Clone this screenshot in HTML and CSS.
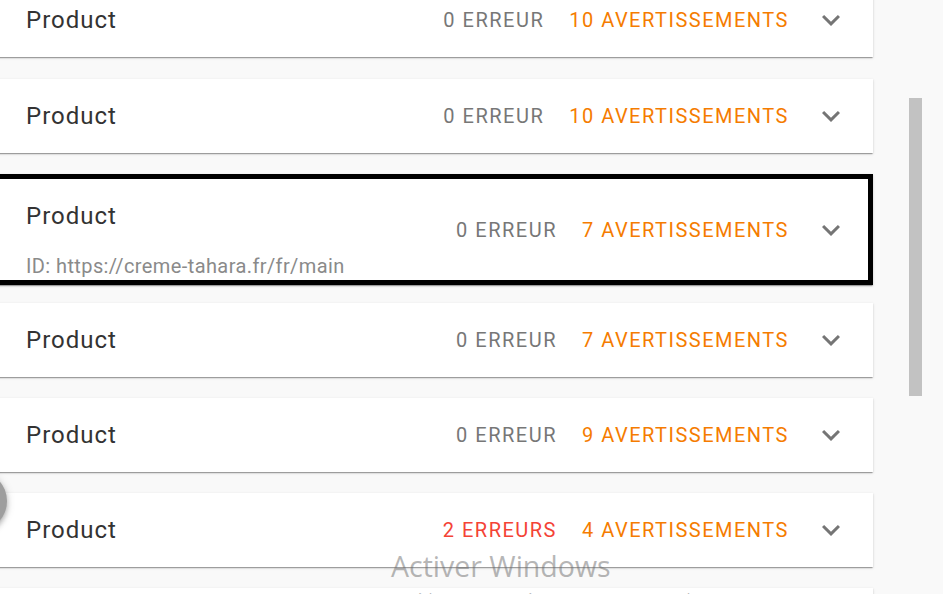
FILE: index.html
```html
<!DOCTYPE html>
<html lang="fr">
<head>
<meta charset="utf-8">
<title>Produits</title>
<link rel="stylesheet" href="styles.css">
</head>
<body>
<div class="page">
  <main class="list">
    <div class="card">
      <div class="info"><div class="title">Product</div></div>
      <div class="counts"><span class="err">0 ERREUR</span><span class="warn">10 AVERTISSEMENTS</span></div>
      <svg class="chev" viewBox="0 0 24 24"><path d="M16.59 8.59L12 13.17 7.41 8.59 6 10l6 6 6-6z"/></svg>
    </div>
    <div class="card">
      <div class="info"><div class="title">Product</div></div>
      <div class="counts"><span class="err">0 ERREUR</span><span class="warn">10 AVERTISSEMENTS</span></div>
      <svg class="chev" viewBox="0 0 24 24"><path d="M16.59 8.59L12 13.17 7.41 8.59 6 10l6 6 6-6z"/></svg>
    </div>
    <div class="card selected">
      <div class="info"><div class="title">Product</div><div class="id">ID: https://creme-tahara.fr/fr/main</div></div>
      <div class="counts"><span class="err">0 ERREUR</span><span class="warn">7 AVERTISSEMENTS</span></div>
      <svg class="chev" viewBox="0 0 24 24"><path d="M16.59 8.59L12 13.17 7.41 8.59 6 10l6 6 6-6z"/></svg>
    </div>
    <div class="card">
      <div class="info"><div class="title">Product</div></div>
      <div class="counts"><span class="err">0 ERREUR</span><span class="warn">7 AVERTISSEMENTS</span></div>
      <svg class="chev" viewBox="0 0 24 24"><path d="M16.59 8.59L12 13.17 7.41 8.59 6 10l6 6 6-6z"/></svg>
    </div>
    <div class="card">
      <div class="info"><div class="title">Product</div></div>
      <div class="counts"><span class="err">0 ERREUR</span><span class="warn">9 AVERTISSEMENTS</span></div>
      <svg class="chev" viewBox="0 0 24 24"><path d="M16.59 8.59L12 13.17 7.41 8.59 6 10l6 6 6-6z"/></svg>
    </div>
    <div class="card">
      <div class="info"><div class="title">Product</div></div>
      <div class="counts"><span class="err red">2 ERREURS</span><span class="warn">4 AVERTISSEMENTS</span></div>
      <svg class="chev" viewBox="0 0 24 24"><path d="M16.59 8.59L12 13.17 7.41 8.59 6 10l6 6 6-6z"/></svg>
    </div>
    <div class="card">
      <div class="info"><div class="title">Product</div></div>
      <div class="counts"><span class="err">0 ERREUR</span><span class="warn">3 AVERTISSEMENTS</span></div>
      <svg class="chev" viewBox="0 0 24 24"><path d="M16.59 8.59L12 13.17 7.41 8.59 6 10l6 6 6-6z"/></svg>
    </div>
  </main>
  <aside class="scroll">
    <div class="track"><div class="thumb"></div></div>
  </aside>
</div>
<div class="fab"></div>
<div class="watermark">
  <div class="wm-title">Activer Windows</div>
  <div class="wm-sub">Accédez aux paramètres pour activer Windows.</div>
</div>
</body>
</html>
```
FILE: styles.css
```css
html, body {
  margin: 0;
  padding: 0;
  height: 100%;
  overflow: hidden;
}
body {
  background: #f9f9f9;
  font-family: Roboto, "Liberation Sans", sans-serif;
}
.page {
  display: flex;
  height: 594px;
  overflow: hidden;
}
.list {
  width: 893px;
  margin-left: -20px;
  margin-top: -17px;
  display: flex;
  flex-direction: column;
  gap: 21px;
  flex: none;
}
.card {
  background: #fff;
  display: flex;
  align-items: center;
  min-height: 74px;
  box-sizing: border-box;
  padding: 0 24px 0 46px;
  box-shadow: 0 2px 1px -1px rgba(0,0,0,.2), 0 1px 1px 0 rgba(0,0,0,.14), 0 1px 3px 0 rgba(0,0,0,.12);
  flex: none;
}
.card:first-child {
  margin-bottom: 1px;
}
.card.selected {
  box-shadow: inset 0 0 0 5px #000, 0 2px 1px -1px rgba(0,0,0,.2), 0 1px 1px 0 rgba(0,0,0,.14), 0 1px 3px 0 rgba(0,0,0,.12);
  margin-bottom: -3px;
}
.info {
  flex: 1;
  padding: 25px 0;
}
.selected .info {
  padding: 30px 0 7px;
}
.title {
  font-size: 24px;
  line-height: 24px;
  letter-spacing: 1px;
  color: #333;
}
.id {
  margin-top: 26px;
  font-size: 20px;
  line-height: 24px;
  letter-spacing: 0.4px;
  color: #8a8a8a;
}
.counts {
  display: flex;
  gap: 25px;
  font-size: 20px;
  letter-spacing: 1.5px;
  line-height: 24px;
}
.err { color: #777; }
.err.red { color: #f44336; }
.warn { color: #f57c00; }
.chev {
  width: 36px;
  height: 36px;
  margin-left: 24px;
  fill: #757575;
  flex: none;
}
.scroll {
  flex: 1;
  display: flex;
  padding-left: 36px;
}
.track {
  width: 13px;
  background: #f9f9f9;
  padding-top: 98px;
}
.thumb {
  width: 13px;
  height: 298px;
  background: #c2c2c2;
}
.fab {
  position: absolute;
  left: -53px;
  top: 471px;
  width: 60px;
  height: 60px;
  border-radius: 50%;
  background: #9e9e9e;
  box-shadow: 0 3px 5px rgba(0,0,0,.25), 0 1px 10px rgba(0,0,0,.15);
}
.watermark {
  position: absolute;
  left: 391px;
  top: 546px;
  color: rgba(110,110,110,.5);
  font-family: "Open Sans", "Noto Sans", sans-serif;
  pointer-events: none;
}
.wm-title {
  font-size: 28.5px;
  line-height: 40px;
}
.wm-sub {
  font-size: 15px;
  line-height: 20px;
  margin-top: 2px;
}
```
